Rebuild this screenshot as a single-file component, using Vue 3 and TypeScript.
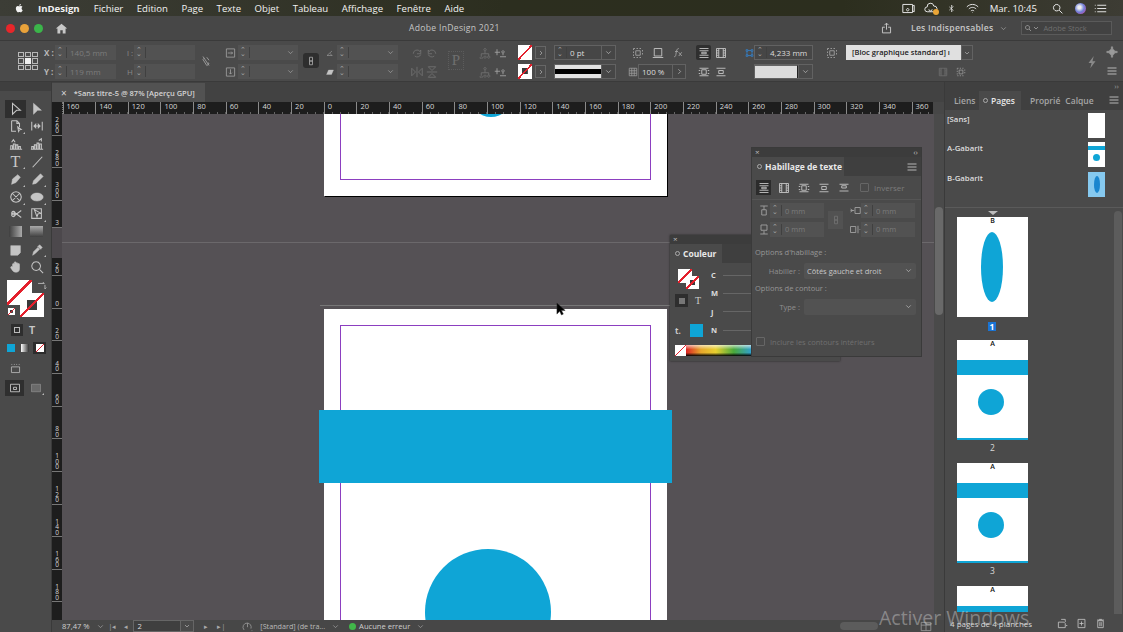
<script setup lang="ts">
const I: Record<string, string> = {
  sel: 'M4 1.5 13 9.5H8.7L4 14Z',
  page: 'M3 2h6l3 3v4M9 2v3h3M3 2v12h5M10 9l4 3-2 .4-1 1.8Z',
  gap: 'M2 3v10M14 3v10M4.5 8h7M4.5 8l2-2v4ZM11.5 8l-2-2v4Z',
  coll: 'M1 14h14M2 14v-4h2v4M5 14V8h2v6M8 14v-5h2v5M11 14v-3h2v3M3 6l2-3 2 3',
  place: 'M1 14h14M2 14v-3h2v3M5 14V9h2v5M8 14V7h2v7M11 14v-6h2v6M10 4l3-2v3',
  line: 'M3 14 14 2',
  pen: 'M3 14 4 8 10 3l3 3-5 6ZM3 14l4-4',
  pencil: 'M3 14l1-4 8-8 3 3-8 8ZM10.500 3.500l3 3',
  frame: 'M8 2a6 6 0 1 0 .01 0ZM4 4l8 8M12 4l-8 8',
  ellipse: 'M8 3.500C12 3.500 15 5.500 15 8s-3 4.500-7 4.500S1 10.500 1 8s3-4.500 7-4.500Z',
  scissors: 'M5 5a2 2 0 1 1-.01 0M5 11a2 2 0 1 0-.01 0M6 6l8 6M6 10l8-6',
  free: 'M2 2h11v11H2ZM5 3l7 4-3 1-1 3Z',
  note: 'M2 3h11v8l-3 3H2ZM4 6h7M4 8.500h7M4 11h4',
  drop: 'M3 14l1-4 5-5 2 2-5 5ZM9 4l2-2 3 3-2 2M8.500 3.500l4 4',
  hand: 'M4 9V5a1 1 0 0 1 2 0V3a1 1 0 0 1 2 0v1a1 1 0 0 1 2 0v1a1 1 0 0 1 2 0v5c0 3-2 4-4 4-3 0-4-2-6-5a1 1 0 0 1 2-1Z',
  zoom: 'M7 2a5 5 0 1 0 .01 0ZM10.500 10.500 15 15',
  home: 'M8 2 1 8h2v6h3.500v-4h3v4H13V8h2Z',
  unlink: 'M4 2l8 12M6 4l-2 2 5 8 3-2-1-2M9 3l3 4',
  scx: 'M2 2h12v12H2ZM4 8h7M9 6l2 2-2 2',
  scy: 'M2 2h12v12H2ZM8 4v7M6 9l2 2 2-2',
  chain: 'M6 3h4v5H6ZM6 8h4v5H6Z',
  angle: 'M2 13 12 4M2 13h11M9 9l2 4',
  shear: 'M5 4h10l-4 9H1Z',
  rcw: 'M3 9a5 5 0 0 1 9-3l1-2v5H8M13 10a5 5 0 0 1-8 2',
  rccw: 'M13 9a5 5 0 0 0-9-3L3 4v5h5M3 10a5 5 0 0 0 8 2',
  flipx: 'M1 3l5 5-5 5ZM15 3l-5 5 5 5ZM8 1v14',
  flipy: 'M3 1l5 5 5-5ZM3 15l5-5 5 5ZM1 8h14',
  sel1: 'M8 2a1.500 1.500 0 1 0 .01 0M8 5v4M3 13a1.500 1.500 0 1 0 .01 0M8 12a1.500 1.500 0 1 0 .01 0M13 12a1.500 1.500 0 1 0 .01 0M3 12V9h10v3',
  dots: 'M4 3v8M1 7h7M12 5a1.500 1.500 0 1 0 .01 0M12 8v3M8 13h8',
  dotted: 'M2 2h2M6 2h2M10 2h2M14 2h0M2 2v2M2 6v2M2 10v2M14 4v2M14 8v2M2 14h2M6 14h2M10 14h2M5 5h6v6H5Z',
  box: 'M3 2h10v10H3ZM1 14h14',
  fx: 'M3 13c2 0 2-2 2.500-5S6.500 2 9 2M4 6h4M9 7l4 5M13 7l-4 5',
  checker: 'M2 2h12v12H2ZM2 6h12M2 10h12M6 2v12M10 2v12',
  wrapA: 'M2 2h12M2 14h12M2 5h12M2 11h12M5 7h6v2H5Z',
  wrapB: 'M2 2h12v12H2ZM5 2v12M11 2v12M2 5h3M2 8h3M2 11h3M11 5h3M11 8h3M11 11h3',
  wrapC: 'M2 3h12M2 13h12M1 6h2M13 6h2M1 10h2M13 10h2M5 5h6v6H5Z',
  wrapD: 'M2 3h12M2 13h12M5 6h6v4H5Z',
  wrapE: 'M2 3h12M5 5h6v3H5ZM2 12h12',
  blue: 'M2 2h3v3H2ZM11 2h3v3h-3ZM2 11h3v3H2ZM11 11h3v3h-3ZM5 3.500h6M5 12.500h6M3.500 5v6M12.500 5v6',
  gear: 'M8 4a4 4 0 1 0 .01 0M7 1h2v3H7ZM7 12h2v3H7ZM1 7h3v2H1ZM12 7h3v2h-3Z',
  bolt: 'M10 1 4 9h3.500L6 15l6-8H8.500Z',
  menu: 'M2 4h12M2 8h12M2 12h12',
  chev: 'M4 6l4 4 4-4',
  right: 'M6 4l4 4-4 4',
  share: 'M3 7h3M10 7h3v7H3V7M8 10V2M5.500 4.500 8 2l2.500 2.500',
  search: 'M7 3a4 4 0 1 0 .01 0ZM10 10l4 4',
  mtop: 'M3 2h10M8 2v5M5 7h6v7H5Z',
  mbot: 'M3 14h10M8 14v-4M4 2h8v7H4Z',
  mleft: 'M2 8h5M2 6l3 2-3 2M8 4h7v8H8Z',
  mright: 'M2 4h7v8H2ZM12 3v10M14 8h1',
  film: 'M1 3h12v10H1ZM7 8a1.500 1.500 0 1 0 .01 0M13 5l2-1v8l-2-1',
  cloud: 'M4 12a3 3 0 0 1 0-6 4 4 0 0 1 8-1 3.500 3.500 0 0 1 1 7ZM6 9a2 2 0 1 0 4 0',
  bt: 'M4 5l7 6-3 3V2l3 3-7 6',
  wifi: 'M1 6c4-4 10-4 14 0M3.500 8.500c3-2.500 6-2.500 9 0M6 11c1.500-1 2.500-1 4 0M8 13v.5',
  list: 'M1 4h1M1 8h1M1 12h1M4 4h11M4 8h11M4 12h11',
  preflight: 'M3 13A6 6 0 0 1 8 3a6 6 0 0 1 5 8M8 3v6M14 14h1',
  addp: 'M2 6h8l2 2v6H2ZM6 2h6v4M13 11h2',
  newp: 'M3 2h10v12H3ZM8 5v6M5 8h6',
  trash: 'M4 4h8v10H4ZM3 3h10M6 2h4M7 6v6M9 6v6',
  layout: 'M1 2h14v12H1ZM8 2v12M1 6h14',
}

interface Tool { d?: string; text?: string; solid?: boolean; corner?: boolean; on?: boolean; grad?: string }
const tools: Tool[] = [
  { d: I.sel, on: true }, { d: I.sel, solid: true },
  { d: I.page, corner: true }, { d: I.gap },
  { d: I.coll }, { d: I.place },
  { text: 'T', corner: true }, { d: I.line },
  { d: I.pen, solid: true, corner: true }, { d: I.pencil, solid: true, corner: true },
  { d: I.frame, corner: true }, { d: I.ellipse, solid: true, corner: true },
  { d: I.scissors }, { d: I.free, corner: true },
  { grad: 'gh' }, { grad: 'gv' },
  { d: I.note, solid: true }, { d: I.drop, solid: true, corner: true },
  { d: I.hand, solid: true }, { d: I.zoom },
]

const menu = ['Fichier', 'Edition', 'Page', 'Texte', 'Objet', 'Tableau', 'Affichage', 'Fenêtre', 'Aide']
const hRuler = [160, 140, 120, 100, 80, 60, 40, 20, 0, 20, 40, 60, 80, 100, 120, 140, 160, 180, 200, 220, 240, 260, 280, 300, 320, 340, 360]
const vTop = [
  { t: '260', h: 21.600 }, { t: '280', h: 32.670 }, { t: '300', h: 32.670 }, { t: '3', h: 27 },
]
const vBottom = [
  { t: '20', h: 18 }, { t: '0', h: 32.670 }, { t: '20', h: 32.670 }, { t: '40', h: 32.670 }, { t: '60', h: 32.670 },
  { t: '80', h: 32.670 }, { t: '100', h: 32.670 }, { t: '120', h: 32.670 }, { t: '140', h: 32.670 }, { t: '160', h: 32.670 },
  { t: '180', h: 32.670 },
]
const masters = [
  { name: '[Sans]', cls: 'm-none' },
  { name: 'A-Gabarit', cls: 'm-a' },
  { name: 'B-Gabarit', cls: 'm-b' },
]
const wrapIcons = [I.wrapA, I.wrapB, I.wrapC, I.wrapD, I.wrapE]
</script>

<template>
  <div class="app">
    <header class="menubar">
      <svg class="apple-svg" viewBox="0 0 16 16"><path d="M11 8.500c0-1.500 1.200-2.200 1.300-2.300-.7-1-1.800-1.200-2.200-1.200-1-.1-1.800.6-2.300.6s-1.200-.6-2-.6C4.700 5 3.700 5.600 3.200 6.600c-1.100 1.900-.3 4.700.8 6.200.5.700 1.100 1.600 1.900 1.500.8 0 1-.5 2-.5s1.200.5 2 .5 1.400-.8 1.900-1.500c.6-.9.800-1.700.8-1.700s-1.600-.6-1.600-2.600ZM9.500 4c.4-.5.700-1.200.6-1.900-.6 0-1.300.4-1.800.9-.4.400-.7 1.100-.6 1.800.7 0 1.400-.3 1.800-.8Z" /></svg>
      <b class="app-name">InDesign</b>
      <span v-for="m in menu" :key="m" class="menu-item">{{ m }}</span>
      <div class="tray">
        <svg class="ic tr" viewBox="0 0 16 16"><path :d="I.film" /></svg>
        <span class="cloud"><svg class="ic tr" viewBox="0 0 16 16"><path :d="I.cloud" /></svg><i></i></span>
        <svg class="ic tr bt" viewBox="0 0 16 16"><path :d="I.bt" /></svg>
        <svg class="ic tr wifi" viewBox="0 0 16 16"><path :d="I.wifi" /></svg>
        <span class="clock">Mar. 10:45</span>
        <svg class="ic tr" viewBox="0 0 16 16"><path :d="I.search" /></svg>
        <i class="siri"></i>
        <svg class="ic tr" viewBox="0 0 16 16"><path :d="I.list" /></svg>
      </div>
    </header>

    <div class="titlebar">
      <i class="light red"></i><i class="light amber"></i><i class="light green"></i>
      <svg class="ic home" viewBox="0 0 16 16"><path :d="I.home" /></svg>
      <span class="doc-title">Adobe InDesign 2021</span>
      <svg class="ic share" viewBox="0 0 16 16"><path :d="I.share" /></svg>
      <span class="workspace">Les Indispensables</span>
      <svg class="ic chev ws-chev" viewBox="0 0 16 16"><path :d="I.chev" /></svg>
      <div class="stock"><svg class="ic mini" viewBox="0 0 16 16"><path :d="I.search" /></svg><svg class="ic mini" viewBox="0 0 16 16"><path :d="I.chev" /></svg><span>Adobe Stock</span></div>
    </div>

    <div class="control">
      <div class="proxy"><i v-for="n in 9" :key="n" :class="{ mid: n === 5 }"></i></div>

      <div class="col c-xy">
        <div class="row"><b class="lab">X :</b><div class="field w61"><span class="spin"></span><span class="val">140,5 mm</span></div></div>
        <div class="row"><b class="lab">Y :</b><div class="field w61"><span class="spin"></span><span class="val">119 mm</span></div></div>
      </div>
      <div class="col c-wh">
        <div class="row"><b class="lab l7">l :</b><div class="field w61"><span class="spin"></span></div></div>
        <div class="row"><b class="lab l7">H :</b><div class="field w61"><span class="spin"></span></div></div>
      </div>
      <svg class="ic dim c-unlink" viewBox="0 0 16 16"><path :d="I.unlink" /></svg>
      <div class="col c-scale">
        <div class="row"><svg class="ic dim i11" viewBox="0 0 16 16"><path :d="I.scx" /></svg><div class="field w60"><span class="spin"></span><svg class="ic chev end" viewBox="0 0 16 16"><path :d="I.chev" /></svg></div></div>
        <div class="row"><svg class="ic dim i11" viewBox="0 0 16 16"><path :d="I.scy" /></svg><div class="field w60"><span class="spin"></span><svg class="ic chev end" viewBox="0 0 16 16"><path :d="I.chev" /></svg></div></div>
      </div>
      <div class="chain"><svg class="ic dim" viewBox="0 0 16 16"><path :d="I.chain" /></svg></div>
      <div class="col c-angle">
        <div class="row"><svg class="ic dim i8" viewBox="0 0 16 16"><path :d="I.angle" /></svg><div class="field w61"><span class="spin"></span><svg class="ic chev end" viewBox="0 0 16 16"><path :d="I.chev" /></svg></div></div>
        <div class="row"><svg class="ic solid i8" viewBox="0 0 16 16"><path :d="I.shear" /></svg><div class="field w61"><span class="spin"></span><svg class="ic chev end" viewBox="0 0 16 16"><path :d="I.chev" /></svg></div></div>
      </div>
      <div class="quad c-rot">
        <svg class="ic faint" viewBox="0 0 16 16"><path :d="I.rcw" /></svg><svg class="ic faint" viewBox="0 0 16 16"><path :d="I.rccw" /></svg>
        <svg class="ic faint" viewBox="0 0 16 16"><path :d="I.flipx" /></svg><svg class="ic faint" viewBox="0 0 16 16"><path :d="I.flipy" /></svg>
      </div>
      <div class="proxy-p"><span>P</span></div>
      <div class="quad c-align">
        <svg class="ic faint" viewBox="0 0 16 16"><path :d="I.sel1" /></svg><svg class="ic dim" viewBox="0 0 16 16"><path :d="I.dots" /></svg>
        <svg class="ic faint" viewBox="0 0 16 16"><path :d="I.sel1" /></svg><svg class="ic dim" viewBox="0 0 16 16"><path :d="I.dots" /></svg>
      </div>
      <div class="col c-sw">
        <div class="row"><i class="none sw14"></i><span class="arrow-btn"><svg class="ic" viewBox="0 0 16 16"><path :d="I.right" /></svg></span></div>
        <div class="row"><i class="stroke-sw sw14"></i><span class="arrow-btn"><svg class="ic" viewBox="0 0 16 16"><path :d="I.right" /></svg></span></div>
      </div>
      <div class="col c-stroke">
        <div class="field live w62"><span class="spin"></span><span class="val w">0 pt</span><span class="cap"><svg class="ic" viewBox="0 0 16 16"><path :d="I.chev" /></svg></span></div>
        <div class="field live w62"><span class="preview"><i></i></span><span class="cap"><svg class="ic" viewBox="0 0 16 16"><path :d="I.chev" /></svg></span></div>
      </div>
      <div class="col c-fx">
        <div class="row fx-row"><svg class="ic dim" viewBox="0 0 16 16"><path :d="I.dotted" /></svg><svg class="ic" viewBox="0 0 16 16"><path :d="I.box" /></svg><svg class="ic dim" viewBox="0 0 16 16"><path :d="I.fx" /></svg></div>
        <div class="row"><svg class="ic dim i10" viewBox="0 0 16 16"><path :d="I.checker" /></svg><div class="field live pct"><span class="val w">100 %</span><span class="cap2"><svg class="ic" viewBox="0 0 16 16"><path :d="I.right" /></svg></span></div></div>
      </div>
      <div class="quad c-wrap">
        <span class="on"><svg class="ic" viewBox="0 0 16 16"><path :d="I.wrapA" /></svg></span><span><svg class="ic" viewBox="0 0 16 16"><path :d="I.wrapB" /></svg></span>
        <span><svg class="ic" viewBox="0 0 16 16"><path :d="I.wrapC" /></svg></span><span><svg class="ic" viewBox="0 0 16 16"><path :d="I.wrapD" /></svg></span>
      </div>
      <div class="col c-ref">
        <div class="row"><svg class="ic blue-ic" viewBox="0 0 16 16"><path :d="I.blue" /></svg><div class="field live w59"><span class="spin"></span><span class="val w">4,233 mm</span></div></div>
        <div class="row"><div class="ref-sw"><i></i><span class="cap"><svg class="ic" viewBox="0 0 16 16"><path :d="I.chev" /></svg></span></div></div>
      </div>
      <svg class="ic dim c-obj" viewBox="0 0 16 16"><path :d="I.dotted" /></svg>
      <div class="col c-style">
        <div class="style-field"><span>[Bloc graphique standard] ı</span><em><svg class="ic" viewBox="0 0 16 16"><path :d="I.chev" /></svg></em></div>
        <div class="row style-icons"><svg class="ic faint" viewBox="0 0 16 16"><path :d="I.wrapB" /></svg><svg class="ic dim" viewBox="0 0 16 16"><path :d="I.dotted" /></svg></div>
      </div>
      <svg class="ic c-bolt" viewBox="0 0 16 16"><path :d="I.bolt" /></svg>
      <div class="col c-gear">
        <svg class="ic solid" viewBox="0 0 16 16"><path :d="I.gear" /></svg>
        <svg class="ic" viewBox="0 0 16 16"><path :d="I.menu" /></svg>
      </div>
    </div>

    <div class="body">
      <aside class="tools">
        <div class="tools-head"></div>
        <div class="tool-grid">
          <span v-for="(t, i) in tools" :key="i" class="tool" :class="{ on: t.on, corner: t.corner }">
            <b v-if="t.text" class="t-glyph">{{ t.text }}</b>
            <i v-else-if="t.grad" :class="t.grad"></i>
            <svg v-else class="ic tool-ic" :class="{ solid: t.solid }" viewBox="0 0 16 16"><path :d="t.d" /></svg>
          </span>
        </div>
        <div class="fillstroke">
          <i class="none big"></i>
          <i class="stroke-sw big second"></i>
          <svg class="ic swap" viewBox="0 0 16 16"><path d="M3 5h9l-2-2M13 7v6l2-2" /></svg>
          <i class="stroke-sw tiny"></i>
        </div>
        <div class="fmt"><span class="fmt-on"><i></i></span><b>T</b></div>
        <div class="apply"><i class="a-blue"></i><i class="gh a-grad"></i><span><i class="none a-none"></i></span></div>
        <svg class="ic screen" viewBox="0 0 16 16"><path d="M3 6h10v7H3ZM3 3h1M6 3h1M9 3h1M12 3h1" /></svg>
        <div class="viewmode">
          <span class="on"><svg class="ic" viewBox="0 0 16 16"><path d="M2 3h12v10H2ZM6 7h4v3H6Z" /></svg></span>
          <span class="corner"><svg class="ic solid" viewBox="0 0 16 16"><path d="M2 3h12v10H2Z" /></svg></span>
        </div>
      </aside>

      <main class="center">
        <div class="tabbar"><div class="doc-tab"><span class="x">×</span><span>*Sans titre-5 @ 87% [Aperçu GPU]</span></div></div>
        <div class="hruler-row">
          <div class="corner-box"></div>
          <div class="hruler"><span v-for="(n, i) in hRuler" :key="i" class="hcell">{{ n }}</span></div>
        </div>
        <div class="workspace-row">
          <div class="vruler">
            <div class="vblock">
              <span v-for="(c, i) in vTop" :key="i" class="vcell" :style="{ height: c.h + 'px' }"><em>{{ c.t }}</em></span>
            </div>
            <div class="vgap"></div>
            <div class="vblock">
              <span v-for="(c, i) in vBottom" :key="i" class="vcell" :style="{ height: c.h + 'px' }"><em>{{ c.t }}</em></span>
            </div>
          </div>
          <div class="canvas">
            <div class="hairline h1"></div>
            <div class="hairline h2"></div>
            <div class="sheet top-sheet"><div class="margin m-top"></div><div class="disc small"></div></div>
            <div class="sheet main-sheet"><div class="margin m-main"></div></div>
            <div class="band"></div>
            <div class="disc big-disc"></div>
          </div>
          <div class="vscroll"><i></i></div>
        </div>
        <footer class="status">
          <span class="zoomv">87,47 %</span><svg class="ic chev s" viewBox="0 0 16 16"><path :d="I.chev" /></svg>
          <span class="nav n1">|◂</span><span class="nav n2">◂</span>
          <div class="pagebox"><span>2</span><em><svg class="ic" viewBox="0 0 16 16"><path :d="I.chev" /></svg></em></div>
          <span class="nav n3">▸</span><span class="nav n4">▸|</span>
          <svg class="ic pf" viewBox="0 0 16 16"><path :d="I.preflight" /></svg>
          <span class="st-a">[Standard] (de tra...</span><svg class="ic chev s" viewBox="0 0 16 16"><path :d="I.chev" /></svg>
          <i class="ok"></i><span class="st-b">Aucune erreur</span><svg class="ic chev s" viewBox="0 0 16 16"><path :d="I.chev" /></svg>
          <i class="hthumb"></i>
          <svg class="ic st-l" viewBox="0 0 16 16"><path :d="I.layout" /></svg>
        </footer>
      </main>

      <aside class="pages">
        <div class="pages-top">››</div>
        <div class="ptabs">
          <span class="pt liens">Liens</span>
          <span class="pt active"><i class="updown"></i>Pages</span>
          <span class="pt prop">Proprié</span>
          <span class="pt calque">Calque</span>
          <svg class="ic pmenu" viewBox="0 0 16 16"><path :d="I.menu" /></svg>
        </div>
        <div class="masters">
          <div v-for="m in masters" :key="m.name" class="master">
            <span>{{ m.name }}</span>
            <div class="mthumb" :class="m.cls"><i></i><u></u></div>
          </div>
        </div>
        <div class="plist">
          <i class="marker"></i>
          <div class="thumb t1"><b>B</b><i class="oval"></i></div>
          <span class="plabel cur">1</span>
          <div class="thumb t2"><b>A</b><i class="tband"></i><i class="tdisc"></i><i class="tfoot"></i></div>
          <span class="plabel">2</span>
          <div class="thumb t2"><b>A</b><i class="tband"></i><i class="tdisc"></i><i class="tfoot"></i></div>
          <span class="plabel">3</span>
          <div class="thumb t4"><b>A</b><i class="tbot"></i></div>
          <i class="pscroll"></i>
        </div>
        <div class="pfoot">
          <span>4 pages de 4 planches</span>
          <svg class="ic" viewBox="0 0 16 16"><path :d="I.addp" /></svg>
          <svg class="ic" viewBox="0 0 16 16"><path :d="I.newp" /></svg>
          <svg class="ic" viewBox="0 0 16 16"><path :d="I.trash" /></svg>
        </div>
      </aside>
    </div>

    <section class="panel couleur">
      <div class="p-head"><span class="p-x">×</span></div>
      <div class="p-tabs"><div class="p-tab"><i class="updown"></i>Couleur</div></div>
      <div class="cou-body">
        <div class="cou-left">
          <div class="mini-fs"><i class="none f1"></i><i class="stroke-sw f2"></i></div>
          <div class="cou-fmt"><span><i></i></span><b>T</b></div>
          <div class="cou-sw"><b>t.</b><i></i></div>
        </div>
        <div class="cou-right">
          <div v-for="l in ['C', 'M', 'J', 'N']" :key="l" class="cou-line"><b>{{ l }}</b><i></i></div>
        </div>
      </div>
      <div class="spectrum"><i class="none"></i><div></div></div>
    </section>

    <section class="panel habillage">
      <div class="p-head"><span class="p-x">×</span><span class="p-c">‹›</span></div>
      <div class="p-tabs">
        <div class="p-tab"><i class="updown"></i>Habillage de texte</div>
        <svg class="ic hmenu" viewBox="0 0 16 16"><path :d="I.menu" /></svg>
      </div>
      <div class="wrap-row">
        <span v-for="(d, i) in wrapIcons" :key="i" class="wbtn" :class="{ on: i === 0 }"><svg class="ic" viewBox="0 0 16 16"><path :d="d" /></svg></span>
        <i class="check"></i><span class="inv">Inverser</span>
      </div>
      <div class="off-grid">
        <div class="off-col">
          <div class="off"><svg class="ic dim" viewBox="0 0 16 16"><path :d="I.mtop" /></svg><div class="ffield"><span class="spin"></span><span>0 mm</span></div></div>
          <div class="off"><svg class="ic dim" viewBox="0 0 16 16"><path :d="I.mbot" /></svg><div class="ffield"><span class="spin"></span><span>0 mm</span></div></div>
        </div>
        <div class="off-chain"><svg class="ic faint" viewBox="0 0 16 16"><path :d="I.chain" /></svg></div>
        <div class="off-col">
          <div class="off"><svg class="ic dim" viewBox="0 0 16 16"><path :d="I.mleft" /></svg><div class="ffield"><span class="spin"></span><span>0 mm</span></div></div>
          <div class="off"><svg class="ic dim" viewBox="0 0 16 16"><path :d="I.mright" /></svg><div class="ffield"><span class="spin"></span><span>0 mm</span></div></div>
        </div>
      </div>
      <p class="opt first">Options d'habillage :</p>
      <div class="sel-row"><label>Habiller :</label><div class="sel"><span>Côtés gauche et droit</span><svg class="ic" viewBox="0 0 16 16"><path :d="I.chev" /></svg></div></div>
      <p class="opt">Options de contour :</p>
      <div class="sel-row t2r"><label>Type :</label><div class="sel"><span></span><svg class="ic" viewBox="0 0 16 16"><path :d="I.chev" /></svg></div></div>
      <div class="incl"><i class="check"></i><span>Inclure les contours intérieurs</span></div>
    </section>

    <svg class="cursor" viewBox="0 0 12 16"><path d="M1 1v12l3-3 2 4 2-1-2-4h4Z" fill="#000" stroke="#333" stroke-width=".5" /></svg>
    <div class="watermark">Activer Windows</div>
  </div>
</template>

<style>
html, body { margin: 0; background: #474747; }
</style>

<style scoped>
.app { position: relative; width: 1123px; height: 632px; overflow: hidden; background: #474747; font-family: "Open Sans", "Noto Sans", sans-serif; font-size: 9px; color: #ccc; display: flex; flex-direction: column; }
i, u, em { display: block; font-style: normal; text-decoration: none; }
.ic { width: 12px; height: 12px; fill: none; stroke: #c4c4c4; stroke-width: 1.2; flex: none; display: block; }
.ic.dim { stroke: #a0a0a0; }
.ic.faint { stroke: #6f6f6f; }
.ic.solid { fill: #c4c4c4; stroke: #c4c4c4; stroke-width: .6; }
.ic.chev { stroke: #a8a8a8; }
.i8 { width: 8px; height: 12px; margin-right: 3px; }
.i10 { width: 10px; height: 10px; margin-right: 0; }
.i11 { width: 11px; height: 12px; margin-right: 2px; }

.menubar { height: 16px; flex: none; display: flex; align-items: center; background: linear-gradient(90deg, #3c3d36, #2c2e1f 45%, #2c2e1e 75%, #3d3c34); padding-left: 14px; color: #f2f2f2; font-size: 9.600px; }
.apple-svg { width: 11px; height: 12px; fill: #f4f4f4; margin-right: 13px; }
.app-name { font-weight: 700; margin-right: 14px; }
.menu-item { margin-right: 13.500px; }
.tray { margin-left: auto; display: flex; align-items: center; padding-right: 16px; }
.tr { width: 13px; height: 13px; stroke: #e6e6e6; margin-left: 8px; }
.cloud { position: relative; display: block; margin-left: 8px; }
.cloud .tr { width: 15px; margin: 0; }
.cloud i { position: absolute; right: -1px; bottom: 0; width: 6px; height: 6px; border-radius: 50%; background: #e9a437; }
.bt { margin-left: 9px; width: 9px; }
.wifi { margin-left: 10px; }
.clock { margin-left: 11px; margin-right: 6px; font-size: 9.600px; white-space: nowrap; }
.siri { width: 11px; height: 11px; border-radius: 50%; margin-left: 11px; background: radial-gradient(circle at 40% 40%, #eee 15%, #6f7fd8 50%, #a05bb8 75%, #333); }

.titlebar { height: 25px; flex: none; display: flex; align-items: center; background: #474747; border-bottom: 1px solid #3a3a3a; box-sizing: border-box; padding-left: 6px; color: #c8c8c8; }
.light { width: 9px; height: 9px; border-radius: 50%; margin-right: 5px; }
.red { background: #e8262a; } .amber { background: #e9a23a; } .green { background: #3bb54a; }
.home { width: 13px; height: 13px; margin-left: 7px; fill: #c8c8c8; stroke: none; }
.doc-title { margin-left: 341px; width: 92px; font-size: 8.600px; letter-spacing: .3px; white-space: nowrap; color: #c6c6c6; }
.share { margin-left: 379px; width: 13px; height: 14px; }
.workspace { margin-left: 18px; font-size: 8.600px; font-weight: 600; letter-spacing: .25px; white-space: nowrap; }
.ws-chev { width: 9px; height: 9px; margin-left: 6px; }
.stock { margin-left: 13px; width: 91px; height: 14px; box-sizing: border-box; border: 1px solid #5a5a5a; display: flex; align-items: center; padding-left: 2px; color: #6f6f6f; font-size: 7.500px; background: #424242; }
.stock .mini { width: 8px; height: 8px; }
.stock span { margin-left: 3px; white-space: nowrap; }

.control { height: 41px; flex: none; box-sizing: border-box; padding: 4px 0 0 18px; display: flex; background: #4a4a4a; border-bottom: 1px solid #3a3a3a; align-items: flex-start; }
.col { display: flex; flex-direction: column; gap: 4px; }
.row { display: flex; align-items: center; height: 15px; }
.lab { width: 11px; font-size: 8px; color: #bbb; white-space: nowrap; font-weight: 700; }
.l7 { width: 7px; font-weight: 400; color: #888; }
.field { height: 15px; display: flex; align-items: center; background: #525252; box-sizing: border-box; color: #7d7d7d; font-size: 8px; position: relative; }
.w61 { width: 61px; } .w60 { width: 60px; } .w62 { width: 62px; } .w59 { width: 59px; }
.spin { width: 11px; height: 11px; flex: none; margin-right: 3px; border-right: 1px solid #404040; position: relative; }
.spin::before { content: "⌃"; position: absolute; left: 2px; top: -1px; font-size: 7px; line-height: 7px; color: #a8a8a8; }
.spin::after { content: "⌄"; position: absolute; left: 2px; top: 3px; font-size: 7px; line-height: 7px; color: #a8a8a8; }
.val { white-space: nowrap; }
.val.w { color: #ddd; }
.end { position: absolute; right: 3px; top: 3px; width: 9px; height: 9px; }
.field.live { background: #464646; border: 1px solid #626262; }
.cap { margin-left: auto; width: 13px; height: 100%; border-left: 1px solid #626262; display: flex; align-items: center; justify-content: center; flex: none; }
.cap .ic, .cap2 .ic { width: 9px; height: 9px; }
.cap2 { margin-left: auto; width: 12px; height: 100%; border-left: 1px solid #626262; display: flex; align-items: center; justify-content: center; }

.proxy { width: 20px; height: 18px; margin-top: 7px; display: grid; grid-template-columns: repeat(3, 1fr); gap: 1px 1.500px; }
.proxy i { border: 1px solid #b8b8b8; box-sizing: border-box; }
.proxy .mid { background: #eee; border-color: #eee; }
.c-xy { margin-left: 6px; }
.c-wh { margin-left: 11px; }
.c-unlink { margin: 10px 0 0 5px; }
.c-scale { margin-left: 13px; }
.chain { margin: 8px 0 0 5px; width: 16px; height: 15px; background: #2e2e2e; border-radius: 3px; display: flex; align-items: center; justify-content: center; }
.c-angle { margin-left: 7px; }
.quad { display: grid; grid-template-columns: 1fr 1fr; grid-template-rows: 15px 15px; row-gap: 4px; justify-items: center; align-items: center; }
.c-rot { margin-left: 11px; width: 30px; }
.proxy-p { margin: 6px 0 0 9px; width: 16px; height: 19px; display: flex; align-items: center; justify-content: center; color: #6f6f6f; font-family: "Liberation Serif", serif; font-size: 15px; border: 1px dotted #5c5c5c; box-sizing: border-box; }
.c-align { margin-left: 14px; width: 29px; }
.c-sw { margin-left: 11px; }
.sw14 { width: 14px; height: 15px; }
.none { background: linear-gradient(to bottom right, #fff 46%, #e3202c 46%, #e3202c 54%, #fff 54%); }
.stroke-sw { background: linear-gradient(to bottom right, transparent 46%, #e3202c 46%, #e3202c 54%, transparent 54%), radial-gradient(#3a3a3a 0 0) center / 42% 42% no-repeat, #fff; }
.arrow-btn { margin-left: 3px; width: 11px; height: 13px; border: 1px solid #666; box-sizing: border-box; display: flex; align-items: center; justify-content: center; }
.arrow-btn .ic { width: 8px; height: 8px; }
.c-stroke { margin-left: 8px; }
.preview { flex: 1; height: 100%; background: #e2e2e2; display: flex; align-items: center; }
.preview i { width: 100%; height: 5px; background: #000; }
.c-fx { margin-left: 12px; width: 58px; }
.fx-row { gap: 8px; padding-left: 4px; }
.pct { width: 48px; }
.pct .val { margin-left: 3px; }
.c-wrap { margin-left: 10px; width: 34px; grid-template-columns: 15px 19px; }
.c-wrap span { width: 15px; height: 15px; display: flex; align-items: center; justify-content: center; }
.c-wrap .on { background: #2f2f2f; border-radius: 2px; }
.c-ref { margin-left: 15px; width: 68px; }
.blue-ic { width: 9px; height: 10px; stroke: #2f8ae0; }
.ref-sw { margin-left: 9px; width: 59px; height: 15px; display: flex; border: 1px solid #626262; box-sizing: border-box; }
.ref-sw i { flex: 1; background: #dcdcdc; border-top: 1px solid #666; border-right: 1px solid #222; box-sizing: border-box; }
.c-obj { margin: 2px 0 0 12px; width: 14px; height: 12px; }
.c-style { margin-left: 7px; width: 127px; }
.style-field { height: 15px; display: flex; align-items: center; color: #222; font-size: 7.500px; }
.style-field span { width: 115px; height: 15px; background: #e0e0e0; line-height: 15px; padding-left: 6px; box-sizing: border-box; white-space: nowrap; overflow: hidden; font-weight: 600; }
.style-field em { width: 12px; height: 15px; border: 1px solid #626262; box-sizing: border-box; display: flex; align-items: center; justify-content: center; }
.style-field .ic { width: 8px; height: 8px; }
.style-icons { margin-left: 92px; gap: 8px; }
.style-icons .ic { width: 10px; height: 10px; }
.ic.c-bolt { margin: 10px 0 0 112px; width: 14px; height: 14px; fill: #8a8a8a; stroke: none; }
.c-gear { margin-left: 7px; gap: 7px; margin-top: 1px; }
.c-gear .solid { fill: #9a9a9a; stroke: #9a9a9a; }

.body { flex: 1; display: flex; min-height: 0; }
.tools { width: 52px; flex: none; background: #4a4a4a; border-right: 1px solid #3a3a3a; box-sizing: border-box; display: flex; flex-direction: column; }
.tools-head { height: 9px; background: #3f3f3f; }
.tool-grid { margin: 9px 0 0 5px; display: grid; grid-template-columns: 21px 21px; grid-auto-rows: 17.600px; }
.tool { display: flex; align-items: center; justify-content: center; position: relative; }
.tool.on { background: #2f2f2f; }
.tool.corner::after, .viewmode .corner::after { content: ""; position: absolute; right: 1px; bottom: 1px; border: 1.500px solid transparent; border-right-color: #bbb; border-bottom-color: #bbb; }
.tool-ic { width: 14px; height: 14px; }
.t-glyph { font-family: "Liberation Serif", serif; font-size: 16px; line-height: 16px; color: #c8c8c8; font-weight: 400; }
.gh, .gv { display: block; }
.tool .gh { width: 13px; height: 11px; background: linear-gradient(90deg, #3f3f3f, #aaa); }
.tool .gv { width: 13px; height: 11px; background: linear-gradient(180deg, #aaa, #3f3f3f); }
.fillstroke { position: relative; height: 38px; margin-top: 4px; }
.big { position: absolute; left: 7px; top: 0; width: 25px; height: 25px; }
.big.second { left: 20px; top: 13px; width: 24px; height: 24px; }
.swap { position: absolute; left: 36px; top: 0; width: 11px; height: 11px; }
.tiny { position: absolute; left: 8px; top: 28px; width: 7px; height: 7px; }
.fmt { display: flex; align-items: center; margin: 6px 0 0 11px; height: 13px; gap: 5px; }
.fmt-on { width: 12px; height: 12px; background: #2e2e2e; display: flex; align-items: center; justify-content: center; }
.fmt-on i { width: 6px; height: 6px; border: 1px solid #bbb; box-sizing: border-box; }
.fmt b { font-family: "Liberation Sans", sans-serif; font-size: 10px; color: #c8c8c8; margin-left: 1px; }
.apply { display: flex; align-items: center; margin: 5px 0 0 7px; height: 12px; }
.a-blue { width: 8px; height: 8px; background: #0fa5d6; }
.a-grad { width: 8px; height: 8px; margin-left: 6px; background: linear-gradient(90deg, #fff, #333); }
.apply span { width: 13px; height: 12px; margin-left: 4px; background: #2c2c2c; display: flex; align-items: center; justify-content: center; }
.a-none { width: 8px; height: 8px; }
.screen { margin: 8px 0 0 9px; width: 13px; height: 13px; stroke: #aaa; }
.viewmode { display: flex; margin: 5px 0 0 5px; align-items: center; }
.viewmode span { width: 19px; height: 16px; display: flex; align-items: center; justify-content: center; position: relative; }
.viewmode .on { background: #2f2f2f; }
.viewmode .corner { margin-left: 2px; }
.viewmode .solid { fill: #6a6a6a; stroke: #aaa; }

.center { width: 892px; flex: none; display: flex; flex-direction: column; }
.tabbar { height: 20px; flex: none; background: #424242; display: flex; align-items: flex-end; }
.doc-tab { width: 153px; height: 19px; background: #525252; display: flex; align-items: center; font-size: 7.500px; font-weight: 600; color: #d4d4d4; white-space: nowrap; box-sizing: border-box; padding-left: 9px; }
.doc-tab .x { margin-right: 7px; font-size: 10px; font-weight: 400; }
.hruler-row { height: 12px; flex: none; display: flex; }
.corner-box { width: 10.500px; flex: none; background: #1d1d1d; border-right: 1px dotted #777; box-sizing: border-box; }
.hruler { flex: none; width: 870.500px; display: flex; overflow: hidden; background: #1d1d1d; }
.hcell { flex: none; width: 32.670px; box-sizing: border-box; border-left: 1px solid #8a8a8a; padding-left: 3px; font-size: 7.500px; line-height: 9px; color: #d8d8d8; background: repeating-linear-gradient(90deg, transparent 0 7px, #666 7px 8px) bottom / 100% 2px no-repeat; }
.workspace-row { flex: 1; display: flex; min-height: 0; }
.vruler { width: 10px; flex: none; background: #1d1d1d; overflow: hidden; }
.vblock { display: flex; flex-direction: column; }
.vgap { height: 30px; background: #4c484c; }
.vcell { flex: none; display: flex; align-items: flex-end; box-sizing: border-box; border-bottom: 1px solid #777; overflow: hidden; }
.vcell em { width: 6px; margin-left: 2px; word-break: break-all; font-size: 6.500px; line-height: 5.500px; color: #d8d8d8; text-align: center; padding-bottom: 1px; }
.canvas { position: relative; width: 872px; flex: none; background: #555155; overflow: hidden; }
.hairline { position: absolute; left: 0; height: 1px; background: #6b686b; }
.h1 { top: 128px; width: 100%; }
.h2 { top: 191px; left: 258px; width: 350px; background: #777; }
.sheet { position: absolute; left: 262px; width: 343px; background: #fff; }
.top-sheet { top: -40px; height: 122px; box-shadow: 1px 1px 0 #000; overflow: hidden; }
.main-sheet { top: 195px; height: 400px; }
.margin { position: absolute; left: 16px; width: 309px; border: 1px solid #8c3fc0; box-sizing: content-box; }
.m-top { top: 0; height: 104px; }
.m-main { top: 16px; height: 420px; }
.disc { position: absolute; background: #0fa5d6; border-radius: 50%; }
.small { left: 146px; top: 1px; width: 42px; height: 42px; }
.band { position: absolute; left: 257px; top: 296px; width: 353px; height: 73px; background: #0fa5d6; }
.big-disc { left: 363px; top: 435px; width: 126px; height: 126px; }
.vscroll { flex: 1; background: #4a4a4a; position: relative; }
.vscroll i { position: absolute; left: 1px; right: 1px; top: 93px; height: 108px; background: #696969; border-radius: 4px; }

.status { height: 12px; flex: none; background: #474747; display: flex; align-items: center; position: relative; font-size: 7.600px; color: #cfcfcf; padding-left: 10px; }
.s { width: 9px; height: 9px; margin-left: 6px; }
.nav { font-size: 7px; color: #aaa; white-space: nowrap; }
.n1 { margin-left: 4px; } .n2 { margin-left: 8px; }
.zoomv { white-space: nowrap; }
.pagebox { margin-left: 5px; width: 61px; height: 12px; border: 1px solid #666; box-sizing: border-box; display: flex; align-items: center; padding-left: 3px; color: #ddd; background: #3f3f3f; }
.pagebox span { flex: 1; }
.pagebox em { width: 12px; height: 100%; background: #4a4a4a; border-left: 1px solid #666; display: flex; align-items: center; justify-content: center; }
.pagebox .ic { width: 8px; height: 8px; }
.n3 { margin-left: 10px; } .n4 { margin-left: 9px; }
.pf { margin-left: 17px; width: 11px; height: 11px; stroke: #999; }
.st-a { margin-left: 7px; white-space: nowrap; color: #bbb; font-size: 7.200px; }
.ok { width: 7px; height: 7px; border-radius: 50%; background: #41b84a; margin-left: 9px; }
.st-b { margin-left: 3px; white-space: nowrap; }
.hthumb { position: absolute; left: 788px; top: 2px; width: 38px; height: 8px; background: #5c5c5c; border-radius: 4px; }
.st-l { position: absolute; left: 868px; top: 1px; width: 12px; height: 11px; stroke: #999; }

.pages { width: 179px; flex: none; background: #4a4a4a; border-left: 1px solid #3a3a3a; box-sizing: border-box; display: flex; flex-direction: column; position: relative; }
.pages-top { height: 9px; background: #404040; text-align: right; font-size: 8px; line-height: 8px; padding-right: 4px; color: #999; }
.ptabs { height: 19px; background: #404040; display: flex; align-items: center; position: relative; font-size: 8.500px; font-weight: 600; color: #a6a6a6; white-space: nowrap; }
.pt { padding: 0 6px; flex: none; }
.liens { padding-left: 9px; width: 34px; box-sizing: border-box; }
.pt.active { background: #4a4a4a; width: 42px; height: 19px; line-height: 19px; box-sizing: border-box; padding: 0 0 0 4px; color: #e8e8e8; display: flex; align-items: center; }
.prop { margin-left: 3px; padding-right: 0; }
.calque { padding-left: 5px; }
.updown { width: 3px; height: 3px; border: 1px solid #aaa; border-radius: 50%; margin-right: 3px; flex: none; }
.pmenu { position: absolute; right: 3px; top: 3px; }
.masters { height: 98px; flex: none; box-sizing: border-box; border-bottom: 1px solid #5a5a5a; padding-top: 3px; }
.master { height: 29.300px; display: flex; justify-content: space-between; font-size: 7.800px; font-weight: 600; color: #dedede; padding: 0 18px 0 2px; }
.master span { margin-top: 1px; }
.mthumb { width: 17px; height: 25px; background: #fff; position: relative; overflow: hidden; }
.m-a i { position: absolute; left: 0; right: 0; top: 4px; height: 4px; background: #0fa5d6; }
.m-a u { position: absolute; left: 5px; top: 12px; width: 7px; height: 7px; border-radius: 50%; background: #0fa5d6; }
.m-b { background: #86c9ef; }
.m-b u { position: absolute; left: 5.500px; top: 4px; width: 6px; height: 17px; border-radius: 50%; background: #1a86cf; }
.plist { flex: 1; position: relative; min-height: 0; padding-left: 12px; overflow: hidden; }
.marker { margin: 3px 0 2px 31px; width: 0; height: 0; border: 5px solid transparent; border-top: 4px solid #bcbcbc; border-bottom: 0; }
.thumb { width: 71px; height: 100px; margin-top: 2px; background: #fff; position: relative; overflow: hidden; color: #111; text-align: center; font-size: 7px; line-height: 8px; }
.thumb b { display: block; font-weight: 600; }
.oval { position: absolute; left: 24px; top: 15px; width: 22px; height: 70px; border-radius: 50%; background: #0fa5d6; }
.plabel { display: block; width: 71px; text-align: center; height: 21px; line-height: 15px; font-size: 8.500px; color: #d8d8d8; }
.plabel.cur { color: transparent; position: relative; }
.plabel.cur::after { content: "1"; position: absolute; left: 31px; top: 5px; width: 8px; height: 9px; line-height: 9px; color: #fff; background: #1a74d4; font-weight: 700; }
.tband { position: absolute; left: 0; right: 0; top: 20px; height: 15px; background: #0fa5d6; }
.tdisc { position: absolute; left: 21px; top: 49px; width: 26px; height: 26px; border-radius: 50%; background: #0fa5d6; }
.tfoot { position: absolute; left: 0; right: 0; bottom: 0; height: 2px; background: #0fa5d6; }
.t4 { height: 26px; }
.tbot { position: absolute; left: 0; right: 0; bottom: 0; height: 6px; background: #0fa5d6; }
.pscroll { position: absolute; right: 1px; top: 3px; width: 8px; bottom: 0; background: #5c5c5c; border-radius: 4px 4px 0 0; }
.pfoot { position: absolute; left: 0; right: 0; bottom: 0; height: 18px; background: #4a4a4a; display: flex; align-items: center; padding-left: 5px; font-size: 8px; color: #d8d8d8; }
.pfoot span { width: 107px; white-space: nowrap; margin-right: 0; }
.pfoot .ic { margin-right: 8px; width: 11px; height: 11px; }

.panel { position: absolute; background: #4a4a4a; box-shadow: 0 0 2px #222; box-sizing: border-box; }
.p-head { height: 9px; background: #3c3c3c; display: flex; justify-content: space-between; padding: 0 3px; font-size: 8px; line-height: 8px; color: #bbb; }
.p-tabs { height: 19px; background: #3f3f3f; display: flex; align-items: stretch; position: relative; }
.p-tab { background: #4a4a4a; display: flex; align-items: center; padding-left: 5px; font-size: 8.500px; font-weight: 700; color: #e8e8e8; white-space: nowrap; box-sizing: border-box; }
.couleur { left: 670px; top: 235px; width: 170px; height: 126px; background: #4a4a4a; }
.couleur .p-tab { width: 52px; }
.cou-body { display: flex; height: 81px; }
.cou-left { width: 41px; padding: 6px 0 0 5px; box-sizing: border-box; flex: none; }
.mini-fs { position: relative; height: 25px; margin-left: 3px; }
.f1 { position: absolute; left: 0; top: 0; width: 14px; height: 14px; }
.f2 { position: absolute; left: 8px; top: 7px; width: 13px; height: 13px; }
.cou-fmt { display: flex; align-items: center; gap: 7px; }
.cou-fmt span { width: 13px; height: 13px; background: #2e2e2e; display: flex; align-items: center; justify-content: center; }
.cou-fmt span i { width: 6px; height: 6px; background: #777; }
.cou-fmt b { font-family: "Liberation Serif", serif; font-size: 10px; font-weight: 400; }
.cou-sw { display: flex; align-items: center; margin-top: 17px; }
.cou-sw b { width: 15px; font-size: 8px; }
.cou-sw i { width: 13px; height: 13px; background: #0fa5d6; }
.cou-right { flex: 1; padding-top: 3px; }
.cou-line { display: flex; align-items: center; height: 18.300px; font-size: 7.500px; }
.cou-line b { width: 12px; color: #ddd; }
.cou-line i { flex: 1; height: 1px; background: #666; }
.spectrum { display: flex; height: 11px; margin: 1px 5px 0; }
.spectrum i { width: 11px; }
.spectrum div { flex: 1; background: linear-gradient(180deg, rgba(255,255,255,.65), transparent 40%, transparent 70%, #000), linear-gradient(90deg, #d22, #e8a82c 10%, #e8d030 20%, #4aaa3c 32%, #30a0d0 44%, #a040a0 70%, #666); }

.habillage { left: 752px; top: 148px; width: 169px; height: 208px; box-shadow: 0 0 0 1px #3a3a3a; }
.habillage .p-tab { width: 92px; }
.hmenu { position: absolute; right: 3px; top: 4px; }
.wrap-row { height: 24px; display: flex; align-items: center; padding-left: 4px; border-bottom: 1px solid #555; box-sizing: border-box; margin-top: 0; }
.wbtn { width: 15px; height: 15px; margin-right: 5px; display: flex; align-items: center; justify-content: center; }
.wbtn.on { background: #2c2c2c; }
.check { width: 7px; height: 7px; border: 1px solid #666; border-radius: 1px; margin-left: 4px; flex: none; }
.inv { margin-left: 5px; color: #7c7c7c; font-size: 8px; }
.off-grid { display: flex; padding: 3px 0 0 6px; align-items: center; }
.off-col { display: flex; flex-direction: column; gap: 3.500px; }
.off { display: flex; align-items: center; gap: 0; }
.off .ic { width: 12px; height: 13px; }
.ffield { width: 54px; height: 15px; background: #525252; display: flex; align-items: center; font-size: 7.500px; color: #7c7c7c; margin-left: 0; }
.off-chain { width: 15px; height: 18px; background: #525252; margin: 0 6px 0 4px; display: flex; align-items: center; justify-content: center; }
.opt { margin: 4px 0 0 3px; font-size: 7.500px; line-height: 11px; color: #969696; }
.opt.first { margin-top: 10px; }
.sel-row { display: flex; align-items: center; margin-top: 5px; height: 16px; }
.sel-row label { width: 52px; padding-right: 4px; box-sizing: border-box; text-align: right; font-size: 7.500px; color: #8f8f8f; white-space: nowrap; }
.sel { width: 112px; height: 16px; background: #525252; border-radius: 2px; display: flex; align-items: center; justify-content: space-between; padding: 0 3px; box-sizing: border-box; font-size: 7.500px; color: #c8c8c8; }
.sel .ic { width: 9px; height: 9px; }
.t2r { margin-top: 5px; }
.incl { display: flex; align-items: center; margin-top: 22px; font-size: 7.500px; color: #707070; white-space: nowrap; }
.incl span { margin-left: 5px; }

.cursor { position: absolute; left: 556px; top: 302px; width: 11px; height: 15px; }
.watermark { position: absolute; left: 879px; top: 604px; font-family: "Open Sans", sans-serif; font-size: 19.500px; line-height: 27px; color: rgba(215, 215, 215, .42); white-space: nowrap; }
</style>
